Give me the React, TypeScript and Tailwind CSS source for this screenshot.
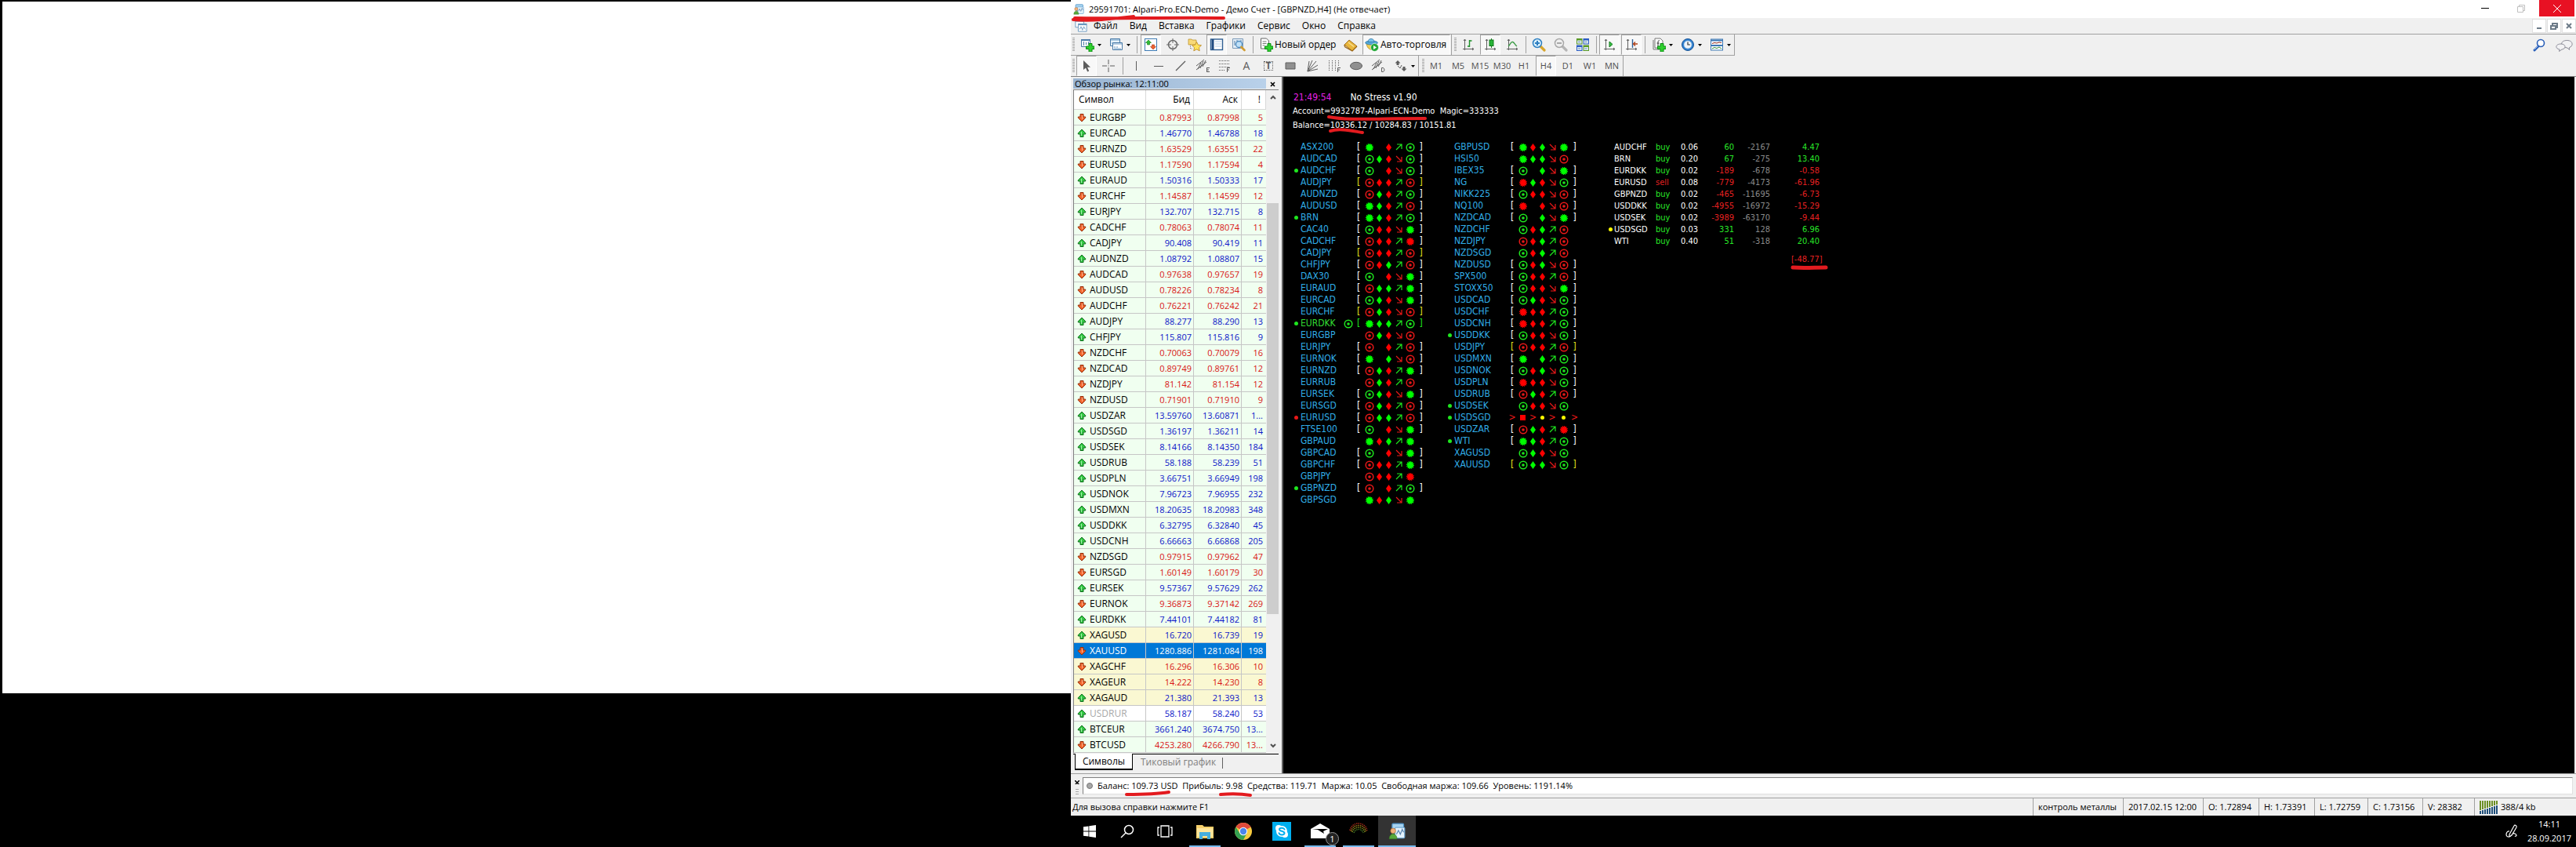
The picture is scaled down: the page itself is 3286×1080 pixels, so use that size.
import React from 'react';
import clsx from 'clsx';

type Quote = [symbol: string, bid: string, ask: string, spread: string, dir: 'up' | 'down'];

const QUOTES: Quote[] = [
  ['EURGBP', '0.87993', '0.87998', '5', 'down'],
  ['EURCAD', '1.46770', '1.46788', '18', 'up'],
  ['EURNZD', '1.63529', '1.63551', '22', 'down'],
  ['EURUSD', '1.17590', '1.17594', '4', 'down'],
  ['EURAUD', '1.50316', '1.50333', '17', 'up'],
  ['EURCHF', '1.14587', '1.14599', '12', 'down'],
  ['EURJPY', '132.707', '132.715', '8', 'up'],
  ['CADCHF', '0.78063', '0.78074', '11', 'down'],
  ['CADJPY', '90.408', '90.419', '11', 'up'],
  ['AUDNZD', '1.08792', '1.08807', '15', 'up'],
  ['AUDCAD', '0.97638', '0.97657', '19', 'down'],
  ['AUDUSD', '0.78226', '0.78234', '8', 'down'],
  ['AUDCHF', '0.76221', '0.76242', '21', 'down'],
  ['AUDJPY', '88.277', '88.290', '13', 'up'],
  ['CHFJPY', '115.807', '115.816', '9', 'up'],
  ['NZDCHF', '0.70063', '0.70079', '16', 'down'],
  ['NZDCAD', '0.89749', '0.89761', '12', 'down'],
  ['NZDJPY', '81.142', '81.154', '12', 'down'],
  ['NZDUSD', '0.71901', '0.71910', '9', 'down'],
  ['USDZAR', '13.59760', '13.60871', '1...', 'up'],
  ['USDSGD', '1.36197', '1.36211', '14', 'up'],
  ['USDSEK', '8.14166', '8.14350', '184', 'up'],
  ['USDRUB', '58.188', '58.239', '51', 'up'],
  ['USDPLN', '3.66751', '3.66949', '198', 'up'],
  ['USDNOK', '7.96723', '7.96955', '232', 'up'],
  ['USDMXN', '18.20635', '18.20983', '348', 'up'],
  ['USDDKK', '6.32795', '6.32840', '45', 'up'],
  ['USDCNH', '6.66663', '6.66868', '205', 'up'],
  ['NZDSGD', '0.97915', '0.97962', '47', 'down'],
  ['EURSGD', '1.60149', '1.60179', '30', 'down'],
  ['EURSEK', '9.57367', '9.57629', '262', 'up'],
  ['EURNOK', '9.36873', '9.37142', '269', 'down'],
  ['EURDKK', '7.44101', '7.44182', '81', 'up'],
  ['XAGUSD', '16.720', '16.739', '19', 'up'],
  ['XAUUSD', '1280.886', '1281.084', '198', 'down'],
  ['XAGCHF', '16.296', '16.306', '10', 'down'],
  ['XAGEUR', '14.222', '14.230', '8', 'down'],
  ['XAGAUD', '21.380', '21.393', '13', 'up'],
  ['USDRUR', '58.187', '58.240', '53', 'up'],
  ['BTCEUR', '3661.240', '3674.750', '13...', 'up'],
  ['BTCUSD', '4253.280', '4266.790', '13...', 'down'],
];

// code: signal, diamond, diamond, arrow, signal
// g/r = ring or diamond, G/R = solid burst, u/d = arrow, - = nothing
type Signal = { name: string; code: string; bracket?: 'w' | 'y' | 'g'; dot?: 'g' | 'r' };

const LEFT_SIGNALS: Signal[] = [
  { name: 'ASX200', code: 'G-rug', bracket: 'w' },
  { name: 'AUDCAD', code: 'ggrdg', bracket: 'w' },
  { name: 'AUDCHF', code: 'g-rdg', bracket: 'w', dot: 'g' },
  { name: 'AUDJPY', code: 'rrrur', bracket: 'y' },
  { name: 'AUDNZD', code: 'rgrug', bracket: 'w' },
  { name: 'AUDUSD', code: 'Ggrur', bracket: 'w' },
  { name: 'BRN', code: 'Ggrug', bracket: 'w', dot: 'g' },
  { name: 'CAC40', code: 'grrdG', bracket: 'w' },
  { name: 'CADCHF', code: 'rrruR', bracket: 'w' },
  { name: 'CADJPY', code: 'rrrur', bracket: 'y' },
  { name: 'CHFJPY', code: 'rrgur', bracket: 'w' },
  { name: 'DAX30', code: 'g-rdG', bracket: 'w' },
  { name: 'EURAUD', code: 'rgguG', bracket: 'w' },
  { name: 'EURCAD', code: 'ggrdG', bracket: 'w' },
  { name: 'EURCHF', code: 'rgrdr', bracket: 'y' },
  { name: 'EURDKK', code: 'Gggug', bracket: 'g', dot: 'g' },
  { name: 'EURGBP', code: 'rgrdr' },
  { name: 'EURJPY', code: 'r-rur', bracket: 'w' },
  { name: 'EURNOK', code: 'G-gdr', bracket: 'w' },
  { name: 'EURNZD', code: 'rgruG', bracket: 'w' },
  { name: 'EURRUB', code: 'rgrur' },
  { name: 'EURSEK', code: 'ggrdG', bracket: 'w' },
  { name: 'EURSGD', code: 'rgrur', bracket: 'w' },
  { name: 'EURUSD', code: 'rggur', bracket: 'w', dot: 'r' },
  { name: 'FTSE100', code: 'g-rdG', bracket: 'w' },
  { name: 'GBPAUD', code: 'GrguG' },
  { name: 'GBPCAD', code: 'g-rdG', bracket: 'w' },
  { name: 'GBPCHF', code: 'rrruG', bracket: 'w' },
  { name: 'GBPJPY', code: 'rrruR' },
  { name: 'GBPNZD', code: 'r-rug', bracket: 'w', dot: 'g' },
  { name: 'GBPSGD', code: 'GrgdG' },
];

const RIGHT_SIGNALS: Signal[] = [
  { name: 'GBPUSD', code: 'GrgdG', bracket: 'w' },
  { name: 'HSI50', code: 'Gggdr' },
  { name: 'IBEX35', code: 'g-gdG', bracket: 'w' },
  { name: 'NG', code: 'Rgrdg', bracket: 'w' },
  { name: 'NIKK225', code: 'grrdr', bracket: 'w' },
  { name: 'NQ100', code: 'R-rdr', bracket: 'w' },
  { name: 'NZDCAD', code: 'g-gdG', bracket: 'w' },
  { name: 'NZDCHF', code: 'grgur' },
  { name: 'NZDJPY', code: 'rrgur' },
  { name: 'NZDSGD', code: 'grgur' },
  { name: 'NZDUSD', code: 'grgdr', bracket: 'w' },
  { name: 'SPX500', code: 'grrur', bracket: 'w' },
  { name: 'STOXX50', code: 'grrdG', bracket: 'w' },
  { name: 'USDCAD', code: 'ggrdg', bracket: 'w' },
  { name: 'USDCHF', code: 'Rrrug', bracket: 'w' },
  { name: 'USDCNH', code: 'Rrrug', bracket: 'w' },
  { name: 'USDDKK', code: 'grrdg', bracket: 'w', dot: 'g' },
  { name: 'USDJPY', code: 'rrrur', bracket: 'y' },
  { name: 'USDMXN', code: 'G-gug', bracket: 'w' },
  { name: 'USDNOK', code: 'grgdg', bracket: 'w' },
  { name: 'USDPLN', code: 'Rrrdg', bracket: 'w' },
  { name: 'USDRUB', code: 'rgrur', bracket: 'w' },
  { name: 'USDSEK', code: 'grrdg', dot: 'g' },
  { name: 'USDSGD', code: '>', dot: 'g' },
  { name: 'USDZAR', code: 'rgruR', bracket: 'w' },
  { name: 'WTI', code: 'Ggrug', bracket: 'w', dot: 'g' },
  { name: 'XAGUSD', code: 'ggrdg' },
  { name: 'XAUUSD', code: 'gggdg', bracket: 'y' },
];

const TRADES = [
  ['AUDCHF', 'buy', '0.06', '60', '-2167', '4.47'],
  ['BRN', 'buy', '0.20', '67', '-275', '13.40'],
  ['EURDKK', 'buy', '0.02', '-189', '-678', '-0.58'],
  ['EURUSD', 'sell', '0.08', '-779', '-4173', '-61.96'],
  ['GBPNZD', 'buy', '0.02', '-465', '-11695', '-6.73'],
  ['USDDKK', 'buy', '0.02', '-4955', '-16972', '-15.29'],
  ['USDSEK', 'buy', '0.02', '-3989', '-63170', '-9.44'],
  ['USDSGD', 'buy', '0.03', '331', '128', '6.96'],
  ['WTI', 'buy', '0.40', '51', '-318', '20.40'],
];

const MENU = ['Файл', 'Вид', 'Вставка', 'Графики', 'Сервис', 'Окно', 'Справка'];
const PERIODS = ['M1', 'M5', 'M15', 'M30', 'H1', 'H4', 'D1', 'W1', 'MN'];

/* ---------- small shared pieces ---------- */

function Icon({ children, size = 18 }: { children: React.ReactNode; size?: number }) {
  return (
    <svg width={size} height={size} viewBox="0 0 18 18" fill="none" className="shrink-0" aria-hidden="true">
      {children}
    </svg>
  );
}

function Marker({ d, className, width = 4 }: { d: string; className: string; width?: number }) {
  return (
    <svg className={clsx('absolute overflow-visible pointer-events-none z-10', className)} width="10" height="10" aria-hidden="true">
      <path d={d} fill="none" stroke="#e31b1f" strokeWidth={width} strokeLinecap="round" strokeLinejoin="round" />
    </svg>
  );
}

function Grip() {
  return (
    <span className="w-1.5 shrink-0 flex justify-center">
      <span className="w-[3px] my-1 bg-[repeating-linear-gradient(to_bottom,#a8a8a8_0_1px,#f0f0f0_1px_2px)]" />
    </span>
  );
}

function Sep({ className = 'w-2' }: { className?: string }) {
  return (
    <span className={clsx('shrink-0 flex justify-center', className)}>
      <span className="w-px my-0.5 bg-[#a0a0a0]" />
    </span>
  );
}

interface ToolProps {
  label: string;
  pressed?: boolean;
  children: React.ReactNode;
}

function Tool({ label, pressed, children }: ToolProps) {
  return (
    <button
      aria-label={label}
      aria-pressed={pressed}
      className={clsx(
        'w-[26px] mx-px shrink-0 flex items-center justify-center border',
        pressed ? 'bg-[#f8f8f8] border-t-[#a0a0a0] border-l-[#a0a0a0] border-r-white border-b-white' : 'border-transparent'
      )}
    >
      {children}
    </button>
  );
}

function DropTool({ label, children }: ToolProps) {
  return (
    <button aria-label={label} className="w-[37px] shrink-0 flex items-center gap-1 pl-1.5">
      {children}
      <svg width="5" height="3" viewBox="0 0 5 3" aria-hidden="true"><path d="M0 0h5L2.500 3z" fill="#000" /></svg>
    </button>
  );
}

/* ---------- toolbar icons ---------- */

const GreenPlus = () => (
  <path d="M11 7.500h4v3.500h3v3.500h-3v3.500h-4v-3.500h-3.500v-3.500h3.500z" fill="#2fd02f" stroke="#0a8a12" strokeWidth="1" />
);

const AxisIcon = ({ children }: { children: React.ReactNode }) => (
  <Icon>
    <path d="M4.500 2v14M2 14.500h14M3 4l1.500-2L6 4M14 13l2 1.500-2 1.500" stroke="#606060" />
    {children}
  </Icon>
);

const AppIcon = ({ size = 16 }: { size?: number }) => (
  <Icon size={size}>
    <rect x="4" y="1" width="12" height="10" rx="1" fill="#a8d4f0" stroke="#4d93c8" />
    <rect x="7" y="5" width="10" height="11" rx="1" fill="#e5f3fc" stroke="#72aad4" />
    <path d="M8.500 12l2-4 2 4 2-5 1.500 3" stroke="#5b86b0" />
    <circle cx="5" cy="8.500" r="2.700" fill="#f2b07a" stroke="#a86428" strokeWidth=".5" />
    <path d="M1 17c0-7 8-7 8 0z" fill="#58a83b" stroke="#34741f" strokeWidth=".5" />
  </Icon>
);

const ChartsIcon = () => (
  <Icon size={16}>
    <path d="M1 1h12v10H1z" fill="#fff" stroke="#6494bd" />
    <path d="M1 2h12" stroke="#6494bd" strokeWidth="2" />
    <path d="M5 6h12v11H5z" fill="#fff" stroke="#6494bd" />
    <path d="M5 7h12" stroke="#6494bd" strokeWidth="2" />
    <path d="M7 14l2-4 2 5 2-5 2 4" stroke="#6494bd" />
  </Icon>
);

const Magnifier = ({ sign, color, fill, handle }: { sign: string; color: string; fill: string; handle: string }) => (
  <Icon>
    <path d="M11 11l5 5" stroke={handle} strokeWidth="3.200" strokeLinecap="round" />
    <circle cx="7" cy="7" r="5.500" fill={fill} stroke={color} strokeWidth="1.500" />
    <path d={sign} stroke={color} strokeWidth="2" />
  </Icon>
);

function StandardBar() {
  return (
    <div className="flex h-7 border-t border-[#a0a0a0]">
      <div className="flex h-[27px] border-b border-r border-[#a0a0a0]">
        <Grip />
        <DropTool label="Новый график">
          <Icon>
            <path d="M1.500 2.500h11v9h-11z" fill="#fff" stroke="#4a7ba8" />
            <path d="M1 3h12" stroke="#4a7ba8" strokeWidth="2" />
            <path d="M4.500 5v5M7.500 6v3M10.500 5v4" stroke="#4a7ba8" />
            <GreenPlus />
          </Icon>
        </DropTool>
        <DropTool label="Профили">
          <Icon>
            <path d="M1.500 1.500h12v9h-12z" fill="#e6f2fa" stroke="#4a7ba8" />
            <path d="M4.500 6.500h12v9h-12z" fill="#fff" stroke="#4a7ba8" />
            <path d="M2 3h11M5 8h11M4 6v2M7 11v2M10 11v2M6 14h9" stroke="#6d9dc6" />
          </Icon>
        </DropTool>
        <Sep />
        <Tool label="Обзор рынка" pressed>
          <Icon>
            <rect x="1.500" y="1.500" width="15" height="15" fill="#fff" stroke="#3f7cb5" />
            <path d="M6 3l3.500 3.500h-2V9h-3V6.500h-2z" fill="#2fbf35" stroke="#14761a" strokeWidth=".6" />
            <path d="M12 15l3.500-3.500h-2V9h-3v2.500h-2z" fill="#f2622e" stroke="#a5330f" strokeWidth=".6" />
          </Icon>
        </Tool>
        <Tool label="Окно данных">
          <Icon>
            <circle cx="9" cy="9" r="5.500" stroke="#6a6a6a" strokeWidth="1.500" />
            <path d="M9 1v6M9 11v6M1 9h6M11 9h6" stroke="#6a6a6a" />
          </Icon>
        </Tool>
        <Tool label="Навигатор">
          <Icon>
            <path d="M1 2h4l1 1h5v6H1z" fill="#f8d978" stroke="#b88a20" strokeWidth=".7" />
            <path d="M3.500 9v5h3" stroke="#777" strokeDasharray="1 1" />
            <path d="M11.500 5.500l1.900 3.700 4.100.6-3 2.900.7 4.100-3.700-1.900-3.700 1.900.7-4.100-3-2.900 4.100-.6z" fill="#ffe25c" stroke="#b8801a" strokeWidth=".8" />
          </Icon>
        </Tool>
        <Tool label="Терминал" pressed>
          <Icon>
            <rect x="1.500" y="2" width="15" height="13.500" fill="#fff" stroke="#2f5f92" strokeWidth="1.400" />
            <path d="M4 2v13.500" stroke="#1f4a80" strokeWidth="3" />
            <path d="M7 5h8M7 8h8M7 11h8" stroke="#b5d0e8" />
          </Icon>
        </Tool>
        <Tool label="Тестер стратегий">
          <Icon>
            <path d="M1.500 1.500h13v12h-13z" fill="#e4eef7" stroke="#7b9ab8" />
            <path d="M4 4v6M7 3v7M12 3v4" stroke="#517ba3" />
            <circle cx="9.500" cy="8.500" r="4" fill="#bfe0f7" stroke="#4f8cc0" strokeWidth="1.300" />
            <path d="M12.500 12l4 4" stroke="#d29d32" strokeWidth="2.600" strokeLinecap="round" />
          </Icon>
        </Tool>
        <Sep />
        <button className="w-[107px] shrink-0 flex items-center gap-0.5 pl-1 whitespace-nowrap">
          <Icon>
            <path d="M2.500 1h7l3 3v10h-10z" fill="#fff" stroke="#666" />
            <path d="M4.500 5h5M4.500 7.500h5M4.500 10h3" stroke="#777" />
            <GreenPlus />
          </Icon>
          Новый ордер
        </button>
        <Tool label="MetaEditor">
          <Icon>
            <path d="M1 9l6-6 10 8-6 6z" fill="#e9b63c" stroke="#9a6412" strokeWidth=".9" />
            <path d="M1 9c0 2 0 2 1 3l9 5 6-6" stroke="#9a6412" strokeWidth="1.300" />
            <path d="M6 6l7 5.500" stroke="#f8df92" strokeWidth="1.500" />
          </Icon>
        </Tool>
        <button
          aria-pressed="true"
          className="w-[112px] mx-px shrink-0 flex items-center gap-0.5 pl-0.5 whitespace-nowrap border border-t-[#a0a0a0] border-l-[#a0a0a0] border-r-white border-b-white bg-[#f8f8f8]"
        >
          <Icon>
            <path d="M2 7c1 11 12 11 13 0z" fill="#f2cf55" stroke="#ab8419" strokeWidth=".7" />
            <ellipse cx="8.500" cy="6.500" rx="8" ry="2.500" fill="#56a9d8" stroke="#256f9f" strokeWidth=".7" />
            <path d="M4 5.500C4 0 12 0 12 5.500z" fill="#78c2ea" stroke="#256f9f" strokeWidth=".7" />
            <circle cx="12.500" cy="12.500" r="5" fill="#22a837" stroke="#fff" strokeWidth=".6" />
            <path d="M11 10l4 2.500-4 2.500z" fill="#fff" />
          </Icon>
          Авто-торговля
        </button>
      </div>
      <div className="flex h-[27px] border-b border-r border-[#a0a0a0] pl-px">
        <Grip />
        <Tool label="Бары">
          <AxisIcon><path d="M10.500 3v9M10.500 4h3M8 11h3" stroke="#1b8f27" strokeWidth="1.400" /></AxisIcon>
        </Tool>
        <Tool label="Свечи" pressed>
          <AxisIcon>
            <path d="M10.500 1v12" stroke="#127a1c" />
            <rect x="8" y="3" width="5" height="7.500" fill="#29b538" stroke="#127a1c" />
          </AxisIcon>
        </Tool>
        <Tool label="Линия">
          <AxisIcon><path d="M4 11c2-1 3-6 5.500-5.500S12 9 15 11" stroke="#3a9a44" strokeWidth="1.300" /></AxisIcon>
        </Tool>
        <Sep className="w-1.5" />
        <Tool label="Увеличить"><Magnifier sign="M7 4v6M4 7h6" color="#2e7fc1" fill="#d9f0fd" handle="#d8a62c" /></Tool>
        <Tool label="Уменьшить"><Magnifier sign="M4 7h6" color="#a8a8a8" fill="#efefef" handle="#b5b5b5" /></Tool>
        <Tool label="Окна мозаикой">
          <Icon>
            <path d="M1 1h7.500v7.500H1z" fill="#5a9a26" />
            <path d="M9.500 1H17v7.500H9.500z" fill="#2b5cc4" />
            <path d="M1 9.500h7.500V17H1z" fill="#2b5cc4" />
            <path d="M9.500 9.500H17V17H9.500z" fill="#5a9a26" />
            <path d="M2 3.500h5.500v4H2zM10.500 3.500H16v4h-5.500zM2 12h5.500v4H2zM10.500 12H16v4h-5.500z" fill="#dbe9f2" />
            <path d="M3 5.500h3M11.500 5.500h3M3 14h3M11.500 14h3" stroke="#6f93b8" />
          </Icon>
        </Tool>
        <Sep className="w-1.5" />
        <Tool label="Автопрокрутка" pressed>
          <AxisIcon><path d="M9 5l4 3.500-4 3.500z" fill="#39c148" stroke="#127a1c" /></AxisIcon>
        </Tool>
        <Tool label="Сдвиг графика" pressed>
          <AxisIcon>
            <path d="M10.500 2v11" stroke="#2c5f98" strokeWidth="1.400" />
            <path d="M17 8h-5M14 5.500L11.500 8l2.500 2.500" stroke="#b0431b" strokeWidth="1.300" />
          </AxisIcon>
        </Tool>
        <Sep className="w-1.5" />
        <DropTool label="Индикаторы">
          <Icon>
            <path d="M4 1h7l3 3v9H4z" fill="#fff" stroke="#777" />
            <path d="M2 3v12h8" stroke="#777" />
            <path d="M10 4c-2-1-2 1-2 3v4M6.500 7h3" stroke="#333" />
            <GreenPlus />
          </Icon>
        </DropTool>
        <DropTool label="Периоды">
          <Icon>
            <circle cx="9" cy="9" r="7.500" fill="#2e7fd0" stroke="#1a5596" />
            <circle cx="9" cy="9" r="5" fill="#eef5fb" stroke="#8fb9de" strokeWidth=".6" />
            <path d="M9 5.500V9h3" stroke="#333" strokeWidth="1.200" />
          </Icon>
        </DropTool>
        <DropTool label="Шаблоны">
          <Icon>
            <rect x="1.500" y="2" width="15" height="14" fill="#fff" stroke="#3c78b4" />
            <path d="M1.500 3.500h15M1.500 10h15" stroke="#3c78b4" strokeWidth="2" />
            <path d="M3 7.500l3-1 3 .5 3-1 3 .5" stroke="#8b2a1f" />
            <path d="M3 14l3-1.500 3 1 3-1.500 3 2" stroke="#2c8a39" />
          </Icon>
        </DropTool>
      </div>
      <div className="ml-auto flex items-center gap-3 pr-1">
        <button aria-label="Поиск">
          <Icon>
            <circle cx="11" cy="6" r="4.500" fill="#fff" stroke="#2a5fb8" strokeWidth="1.600" />
            <path d="M8 10l-5 5" stroke="#2a5fb8" strokeWidth="3" strokeLinecap="round" />
            <path d="M7 10l-4 4" stroke="#a9c4ee" />
          </Icon>
        </button>
        <button aria-label="Сообщения">
          <svg width="22" height="16" viewBox="0 0 22 16" fill="#f2f2f4" stroke="#8a8a96" aria-hidden="true">
            <path d="M15 11l2.500 2.500-.2-2.800C23 9 22.500 1.500 14.500 1.500 6 1.500 5.500 9 12 10.500z" />
            <path d="M5 13l-.5 2.500L8 13c6-.8 5-7-1-7-7.500 0-8 6-2 7z" />
          </svg>
        </button>
      </div>
    </div>
  );
}

function DrawingBar() {
  const g = '#5c5c5c';
  return (
    <div className="flex h-[27px] border-b border-[#808080]">
      <div className="flex border-r border-[#a0a0a0]">
        <Grip />
        <Tool label="Курсор" pressed>
          <Icon><path d="M5 2v12l3-2.500 2.200 5 2-1-2.200-4.700h4z" fill={g} /></Icon>
        </Tool>
        <Tool label="Перекрестие">
          <Icon><path d="M9 1v6M9 11v6M1 9h6M11 9h6M9 8.500v1" stroke={g} /></Icon>
        </Tool>
        <Sep />
        <Tool label="Вертикальная линия"><Icon><path d="M8.500 3v12" stroke={g} /></Icon></Tool>
        <Tool label="Горизонтальная линия"><Icon><path d="M3 9.500h12" stroke={g} /></Icon></Tool>
        <Tool label="Трендовая линия"><Icon><path d="M3 15L15 3" stroke={g} strokeWidth="1.300" /></Icon></Tool>
        <Tool label="Равноудаленный канал">
          <Icon><path d="M1 9l10-8M1 14L14 4M3 13l4-8M6 12l4-9M9 10l4-8M14.500 11v6M14.500 11.500H18M14.500 14H17M14.500 16.500H18" stroke={g} /></Icon>
        </Tool>
        <Tool label="Линии Фибоначчи">
          <Icon>
            <path d="M2 2.500h13M2 6.500h13M2 10.500h13M2 14.500h7" stroke={g} strokeDasharray="1 1" />
            <path d="M12.500 17v-5.500H16M12.500 14H15" stroke={g} />
          </Icon>
        </Tool>
        <Tool label="Текст"><span className="text-sm text-[#5c5c5c]">A</span></Tool>
        <Tool label="Текстовая метка">
          <span className="w-3 h-3 border border-dotted border-[#5c5c5c] text-xs leading-[10px] font-bold text-[#5c5c5c]">T</span>
        </Tool>
        <Tool label="Прямоугольник"><Icon><path d="M3 5h12v8H3z" fill="#909090" stroke={g} /></Icon></Tool>
        <Tool label="Веер">
          <Icon><path d="M3 16L5 3M3 16L9 2M3 16L14 3M3 16L16 8M3 16l13-3" stroke={g} /></Icon>
        </Tool>
        <Tool label="Временные зоны">
          <Icon>
            <path d="M2.500 2v13M6.500 2v13M10.500 2v13M14.500 2v8" stroke={g} strokeDasharray="1 1" />
            <path d="M13.500 17v-5.500H17M13.500 14H16" stroke={g} />
          </Icon>
        </Tool>
        <Tool label="Эллипс"><Icon><ellipse cx="9" cy="9" rx="7.500" ry="4.700" fill="#909090" stroke={g} /></Icon></Tool>
        <Tool label="Канал отклонения">
          <Icon><path d="M1 9l10-8M1 14L14 4M3 13l4-8M6 12l4-9M9 10l4-8M13.500 11.500v5h1.500c2.500 0 2.500-5 0-5z" stroke={g} /></Icon>
        </Tool>
        <DropTool label="Стрелки">
          <Icon>
            <path d="M5 2l3.500 3.500h-2V8h-3V5.500h-2zM13 16l3.500-3.500h-2V10h-3v2.500h-2z" fill={g} />
            <path d="M5 9l3 3 2-4" stroke={g} />
          </Icon>
        </DropTool>
      </div>
      <div className="flex border-r border-[#a0a0a0] pl-0.5">
        <Grip />
        {PERIODS.map(p => (
          <Tool key={p} label={p} pressed={p === 'H4'}>
            <span className="text-[11px] text-[#505050]">{p}</span>
          </Tool>
        ))}
      </div>
    </div>
  );
}

/* ---------- window chrome ---------- */

function TitleBar() {
  return (
    <div className="h-[23px] bg-white flex items-center pl-[3px] text-black">
      <AppIcon size={14} />
      <h1 className="relative ml-1.5 text-[11px] leading-4">
        29591701: Alpari-Pro.ECN-Demo - Демо Счет - [GBPNZD,H4] (Не отвечает)
        <Marker className="left-0 top-0" d="M-20 21c25 2 50-1 77-4M-18 19c50 1 120-1 190 0" />
      </h1>
      <div className="ml-auto self-start flex h-[21px]">
        <button aria-label="Свернуть" className="w-[46px] flex items-center justify-center">
          <span className="w-2.5 h-px bg-black" />
        </button>
        <button aria-label="Свернуть в окно" className="w-[46px] flex items-center justify-center">
          <svg width="10" height="10" fill="none" stroke="#c0c0c0" aria-hidden="true">
            <path d="M.5 2.500h7v7h-7zM2.500 2.500v-2h7v7h-2" />
          </svg>
        </button>
        <button aria-label="Закрыть" className="w-[45px] bg-[#e81123] flex items-center justify-center mr-0.5">
          <svg width="10" height="10" stroke="#fff" aria-hidden="true"><path d="M0 0l10 10M10 0L0 10" /></svg>
        </button>
      </div>
    </div>
  );
}

function MenuBar() {
  const mdi = [
    ['Свернуть график', 'M2 8h6'],
    ['Развернуть график', 'M1 5h6v4H1zM3 4V2h6v5H8'],
    ['Закрыть график', 'M2 2l6 6M8 2L2 8'],
  ];
  return (
    <nav className="h-5 flex items-center pl-[5px] text-xs text-black">
      <ChartsIcon />
      <ul className="flex gap-[15px] ml-2">
        {MENU.map(m => (
          <li key={m}><button>{m}</button></li>
        ))}
      </ul>
      <div className="ml-auto flex gap-px">
        {mdi.map(([label, d]) => (
          <button key={label} aria-label={label} className="w-[18px] h-[18px] bg-white border border-[#e0e0e0] flex items-center justify-center">
            <svg width="10" height="10" fill="none" stroke="#6d7b88" strokeWidth="2" aria-hidden="true"><path d={d} /></svg>
          </button>
        ))}
      </div>
    </nav>
  );
}

function PriceArrow({ dir }: { dir: 'up' | 'down' }) {
  const up = dir === 'up';
  return (
    <svg width="12" height="12" viewBox="0 0 12 12" aria-hidden="true" className={clsx('shrink-0', !up && 'rotate-180')}>
      <path d="M6 1l4.700 4.700v1.300H8v3.500H4V7H1.300V5.700z" fill={up ? '#35c845' : '#f0642c'} stroke={up ? '#0f6d1c' : '#94300c'} />
      <path d="M5.500 4v5" stroke={up ? '#a5f0ad' : '#ffb48f'} />
    </svg>
  );
}

function MarketWatch() {
  const cell = 'border-r border-b border-[#c6c6c6] text-right text-[11px]';
  return (
    <aside className="w-[271px] shrink-0 pl-[3px] pt-0.5 pb-1 pr-1 flex flex-col border-r-2 border-[#606060] text-xs text-black">
      <div className="flex h-3.5 items-start">
        <h2 className="w-[249px] h-[13px] text-[11px] leading-[13px] pl-0.5 bg-linear-to-r from-[#99b4d1] to-[#b9d1ea]">Обзор рынка: 12:11:00</h2>
        <button aria-label="Закрыть обзор рынка" className="w-4 h-3.5 flex items-center justify-center">
          <svg width="7" height="7" stroke="#000" strokeWidth="1.600" aria-hidden="true"><path d="M1 1l5 5M6 1L1 6" /></svg>
        </button>
      </div>
      <div className="flex border-t border-l border-[#808080]">
        <table className="w-[245px] table-fixed border-separate border-spacing-0 bg-white">
          <colgroup>
            <col className="w-[92px]" />
            <col className="w-[61px]" />
            <col className="w-[61px]" />
            <col className="w-[31px]" />
          </colgroup>
          <thead>
            <tr className="h-[25px]">
              <th className="font-normal text-left pl-1.5 border-r border-b border-[#d8d8d8]">Символ</th>
              <th className="font-normal text-right pr-1 border-r border-b border-[#d8d8d8]">Бид</th>
              <th className="font-normal text-right pr-1 border-r border-b border-[#d8d8d8]">Аск</th>
              <th className="font-normal text-right pr-1.5 border-r border-b border-[#d8d8d8]">!</th>
            </tr>
          </thead>
          <tbody>
            {QUOTES.map(([symbol, bid, ask, spread, dir]) => {
              const selected = symbol === 'XAUUSD';
              return (
                <tr
                  key={symbol}
                  className={clsx(
                    'h-5 leading-4',
                    selected ? 'bg-[#0078d7] text-white' : dir === 'up' ? 'text-[#0a14c8]' : 'text-[#d81414]',
                    !selected && (symbol === 'USDRUR' ? 'bg-white' : symbol.startsWith('XAG') ? 'bg-[#faf8d2]' : 'bg-[#f0fff0]')
                  )}
                >
                  <td className={clsx('border-r border-b border-[#c6c6c6] pl-1', selected ? 'text-white' : symbol === 'USDRUR' ? 'text-[#a8a8a8]' : 'text-black')}>
                    <span className="flex items-center gap-1">
                      <PriceArrow dir={dir} />
                      {symbol}
                    </span>
                  </td>
                  <td className={clsx(cell, 'pr-0.5')}>{bid}</td>
                  <td className={clsx(cell, 'pr-0.5')}>{ask}</td>
                  <td className="border-b border-[#c6c6c6] text-right text-[11px] pr-1">{spread}</td>
                </tr>
              );
            })}
          </tbody>
        </table>
        <div className="w-[15px] ml-px flex flex-col items-center justify-between py-1.5 bg-[#f0f0f0] relative">
          <svg width="8" height="6" fill="none" stroke="#505050" strokeWidth="2" aria-hidden="true"><path d="M1 5l3-3 3 3" /></svg>
          <span className="absolute inset-x-0 top-[17%] bottom-[21%] bg-[#cdcdcd]" />
          <svg width="8" height="6" fill="none" stroke="#505050" strokeWidth="2" aria-hidden="true"><path d="M1 1l3 3 3-3" /></svg>
        </div>
      </div>
      <div className="mt-px flex items-start border-t border-black pl-0.5">
        <button className="-mt-px h-[21px] w-[74px] bg-white border border-t-0 border-black border-b-2">Символы</button>
        <button className="h-5 pl-2.5 text-[#808080]">Тиковый график</button>
        <span className="w-px h-3.5 mt-1 ml-2 bg-[#606060]" />
      </div>
    </aside>
  );
}

/* ---------- chart ---------- */

const GREEN = '#1ee61e';
const RED = '#e81818';

function Ring({ color }: { color: string }) {
  return (
    <svg width="12" height="12" viewBox="0 0 12 12" className="mx-auto" aria-hidden="true">
      <circle cx="6" cy="6" r="4.800" fill="none" stroke={color} strokeWidth="1.500" />
      <circle cx="6" cy="6" r="1.800" fill={color} />
    </svg>
  );
}

function Burst({ color }: { color: string }) {
  return (
    <svg width="12" height="12" viewBox="0 0 12 12" className="mx-auto" aria-hidden="true">
      <circle cx="6" cy="6" r="3.900" fill={color} />
      <circle cx="6" cy="6" r="4.300" fill="none" stroke={color} strokeWidth="1.400" strokeDasharray="1.200 1" />
    </svg>
  );
}

function SignalGlyph({ ch }: { ch: string }) {
  if (ch === 'G' || ch === 'R') return <Burst color={ch === 'G' ? '#00ff00' : '#ff0000'} />;
  return <Ring color={ch === 'g' ? GREEN : RED} />;
}

function Diamond({ ch }: { ch: string }) {
  if (ch === '-') return null;
  return (
    <svg width="7" height="10" viewBox="0 0 7 10" className="mx-auto" aria-hidden="true">
      <path d="M3.500 0L7 5l-3.500 5L0 5z" fill={ch === 'g' ? '#00ff00' : '#ff0000'} />
    </svg>
  );
}

function Trend({ ch }: { ch: string }) {
  const up = ch === 'u';
  return (
    <svg width="9" height="9" viewBox="0 0 9 9" fill="none" className="mx-auto" aria-hidden="true">
      <path d={up ? 'M1 8l6.500-6.500M2 1h6v6' : 'M1 1l6.500 6.500M2 8h6V2'} stroke={up ? GREEN : RED} strokeWidth="1.200" />
    </svg>
  );
}

function Dot({ className }: { className: string }) {
  return <span className={clsx('block w-[5px] h-[5px] rounded-full mx-auto', className)} />;
}

function SignalTable({ rows }: { rows: Signal[] }) {
  return (
    <table className="w-[171px] table-fixed text-xs text-center">
      <colgroup>
        <col className="w-2.5" />
        <col className="w-[55px]" />
        <col className="w-[13px]" />
        <col className="w-3.5" />
        <col className="w-[13px]" />
        <col className="w-[13px]" />
        <col className="w-[11px]" />
        <col className="w-3.5" />
        <col className="w-[15px]" />
        <col className="w-[13px]" />
      </colgroup>
      <tbody>
        {rows.map(({ name, code, bracket, dot }) => {
          const alert = code === '>';
          const hot = bracket === 'g';
          const edge = clsx('p-0', alert ? 'text-[#e81818]' : hot ? 'text-[#1ee61e]' : bracket === 'y' ? 'text-[#e6e61e]' : 'text-white');
          return (
            <tr key={name} className="h-[15px] leading-[15px]">
              <td className="p-0">{dot && <Dot className={dot === 'g' ? 'bg-[#1ee61e]' : 'bg-[#e81818]'} />}</td>
              <td className={clsx('p-0 pl-px text-left', hot ? 'text-[#32dc32]' : 'text-[#30aee8]')}>{name}</td>
              <td className="p-0">{hot && <Ring color={GREEN} />}</td>
              <td className={edge}>{alert ? '>' : bracket && '['}</td>
              {alert ? (
                <>
                  <td className="p-0"><span className="block w-[7px] h-[7px] mx-auto bg-[#ff0000]" /></td>
                  <td className={edge}>&gt;</td>
                  <td className="p-0"><Dot className="bg-[#ffff00]" /></td>
                  <td className={edge}>&gt;</td>
                  <td className="p-0"><Dot className="bg-[#ffff00]" /></td>
                </>
              ) : (
                <>
                  <td className="p-0"><SignalGlyph ch={code[0]} /></td>
                  <td className="p-0"><Diamond ch={code[1]} /></td>
                  <td className="p-0"><Diamond ch={code[2]} /></td>
                  <td className="p-0"><Trend ch={code[3]} /></td>
                  <td className="p-0"><SignalGlyph ch={code[4]} /></td>
                </>
              )}
              <td className={edge}>{alert ? '>' : bracket && ']'}</td>
            </tr>
          );
        })}
      </tbody>
    </table>
  );
}

const tone = (v: string) => (v.startsWith('-') ? 'text-[#e62020]' : 'text-[#28e628]');

function TradeTable() {
  return (
    <div className="text-[11px]">
      <table className="w-[272px] table-fixed text-right">
        <colgroup>
          <col className="w-2.5" />
          <col className="w-[53px]" />
          <col className="w-8" />
          <col className="w-6" />
          <col className="w-11" />
          <col className="w-[46px]" />
          <col className="w-[63px]" />
        </colgroup>
        <tbody>
          {TRADES.map(([symbol, side, lots, pips, swap, profit]) => (
            <tr key={symbol} className="h-[15px] leading-[15px]">
              <td className="p-0">{symbol === 'USDSGD' && <Dot className="bg-[#ffff00]" />}</td>
              <td className="p-0 text-left text-white">{symbol}</td>
              <td className={clsx('p-0 text-left', side === 'sell' ? 'text-[#e62020]' : 'text-[#28e628]')}>{side}</td>
              <td className="p-0 text-left text-white">{lots}</td>
              <td className={clsx('p-0', tone(pips))}>{pips}</td>
              <td className="p-0 text-[#8a8a8a]">{swap}</td>
              <td className={clsx('p-0', tone(profit))}>{profit}</td>
            </tr>
          ))}
        </tbody>
      </table>
      <p className="relative ml-auto -mr-1 w-10 mt-2 text-[#e62020] whitespace-nowrap">
        [-48.77]
        <Marker className="left-0 top-0" d="M2 18c14 1 28 0 42 0" width={5} />
      </p>
    </div>
  );
}

function Chart() {
  return (
    <main className="grow bg-black mr-0.5 pl-[11px] pt-[17px] text-white font-[family-name:'DejaVu_Sans_Condensed','DejaVu_Sans',sans-serif]">
      <div className="flex gap-6 pl-0.5 text-xs leading-[18px]">
        <span className="text-[#e620e6]">21:49:54</span>
        <span>No Stress v1.90</span>
      </div>
      <div className="relative pl-px text-[11px] leading-[18px] whitespace-pre">
        <p>Account=9932787-Alpari-ECN-Demo  Magic=333333</p>
        <p>Balance=10336.12 / 10284.83 / 10151.81</p>
        <Marker className="left-0 top-0" d="M47 16c25 5 60 2 123 2" />
        <Marker className="left-0 top-0" d="M49 34c12-4 28 0 41 2" />
      </div>
      <div className="flex items-start mt-[11px]">
        <SignalTable rows={LEFT_SIGNALS} />
        <div className="ml-[25px]"><SignalTable rows={RIGHT_SIGNALS} /></div>
        <div className="ml-[34px]"><TradeTable /></div>
      </div>
    </main>
  );
}

/* ---------- bottom bars ---------- */

function TerminalStrip() {
  return (
    <div className="h-[31px] flex border-t border-[#a0a0a0] py-1 pr-1 text-[11px] text-black">
      <div className="w-[15px] flex flex-col items-center gap-1.5 pt-1">
        <svg width="6" height="6" stroke="#000" strokeWidth="1.500" aria-hidden="true"><path d="M0 0l6 6M6 0L0 6" /></svg>
        <span className="w-1 h-2 bg-[repeating-linear-gradient(to_bottom,#a8a8a8_0_1px,#f0f0f0_1px_3px)]" />
      </div>
      <div className="grow bg-white border border-[#808080] border-b-[#e0e0e0] border-r-[#e0e0e0] flex items-center pl-1 whitespace-pre">
        <span className="w-2 h-2 rounded-full bg-[#a8a8a8] border border-[#777]" />
        <p className="relative ml-1.5">
          Баланс: 109.73 USD  Прибыль: 9.98  Средства: 119.71  Маржа: 10.05  Свободная маржа: 109.66  Уровень: 1191.14%
          <Marker className="left-0 top-0" d="M37 19c18 0 36 0 54-3" />
          <Marker className="left-0 top-0" d="M157 19c12-1 26-1 38 1" />
        </p>
      </div>
    </div>
  );
}

function StatusBar() {
  const cell = 'h-full flex items-center border-l border-[#a0a0a0] pl-1.5';
  return (
    <footer className="h-[23px] flex items-center border-t border-[#a0a0a0] pl-0.5 text-[11px] text-black whitespace-nowrap">
      <span className="grow">Для вызова справки нажмите F1</span>
      <span className={clsx(cell, 'w-[115px]')}>контроль металлы</span>
      <span className={clsx(cell, 'w-[102px]')}>2017.02.15 12:00</span>
      <span className={clsx(cell, 'w-[71px]')}>O: 1.72894</span>
      <span className={clsx(cell, 'w-[71px]')}>H: 1.73391</span>
      <span className={clsx(cell, 'w-[68px]')}>L: 1.72759</span>
      <span className={clsx(cell, 'w-[70px]')}>C: 1.73156</span>
      <span className={clsx(cell, 'w-[66px]')}>V: 28382</span>
      <span className={clsx(cell, 'w-[130px] gap-1')}>
        <svg width="23" height="17" viewBox="0 0 23 17" aria-hidden="true">
          {[0, 3, 6, 9, 12, 15, 18, 21].map((x, i) => (
            <g key={x}>
              <rect x={x} y="0" width="2" height={12 - i} fill="#6b8e23" />
              <rect x={x} y={13 - i} width="2" height={4 + i} fill="#1f4e79" />
            </g>
          ))}
        </svg>
        388/4 kb
      </span>
    </footer>
  );
}

interface TaskProps {
  label: string;
  running?: boolean;
  active?: boolean;
  children: React.ReactNode;
}

function Task({ label, running, active, children }: TaskProps) {
  return (
    <button aria-label={label} className={clsx('relative w-12 h-10 flex items-center justify-center', active && 'bg-[#333333]')}>
      {children}
      {running && <span className={clsx('absolute bottom-0 h-0.5 bg-[#76b9ed]', active ? 'inset-x-0' : 'inset-x-1')} />}
    </button>
  );
}

function Taskbar() {
  return (
    <div className="h-10 bg-black flex text-white">
      <Task label="Пуск">
        <svg width="16" height="16" viewBox="0 0 16 16" fill="#fff" aria-hidden="true">
          <path d="M0 2.300l6.500-.9v6.200H0zM7.300 1.300L16 0v7.600H7.300zM0 8.400h6.500v6.200L0 13.700zM7.300 8.400H16V16l-8.700-1.300z" />
        </svg>
      </Task>
      <Task label="Поиск">
        <svg width="18" height="18" fill="none" stroke="#fff" strokeWidth="1.500" aria-hidden="true">
          <circle cx="11" cy="7" r="5.500" />
          <path d="M7 11l-6 6" />
        </svg>
      </Task>
      <Task label="Представление задач">
        <svg width="20" height="16" fill="none" stroke="#fff" strokeWidth="1.300" aria-hidden="true">
          <path d="M5 1h10v14H5zM3 3H1v10h2M17 3h2v10h-2" />
        </svg>
      </Task>
      <div className="flex gap-px ml-[3px]">
        <Task label="Проводник" running>
          <svg width="22" height="19" viewBox="0 0 22 19" aria-hidden="true">
            <path d="M0 1h8l2 2h12v15H0z" fill="#f5cf6a" />
            <path d="M1 5h20v11H1z" fill="#fde59c" />
            <path d="M4 19v-9h14v9h-4v-4H8v4z" fill="#45aede" />
          </svg>
        </Task>
        <Task label="Chrome">
          <svg width="22" height="22" viewBox="0 0 22 22" aria-hidden="true">
            <circle cx="11" cy="11" r="11" fill="#f7ca3e" />
            <path d="M11 11L1.500 5.500A11 11 0 0120.500 5.500z" fill="#df4a3c" />
            <path d="M1.500 5.500A11 11 0 0011 22l4.500-8.500-9 0z" fill="#34a152" />
            <path d="M11 5.500h9.500" stroke="#df4a3c" />
            <circle cx="11" cy="11" r="5.200" fill="#fff" />
            <circle cx="11" cy="11" r="4.200" fill="#4a85ec" />
          </svg>
        </Task>
        <Task label="Skype">
          <svg width="24" height="24" viewBox="0 0 24 24" aria-hidden="true">
            <path d="M0 0h24v24H0z" fill="#00aff0" />
            <circle cx="12" cy="12" r="7" fill="#fff" />
            <circle cx="8" cy="8" r="4" fill="#fff" />
            <circle cx="16" cy="16" r="4" fill="#fff" />
            <path d="M15.500 9.500c-1-2.500-6.500-2.500-6.500 0 0 3 6.500 1.500 6.500 5 0 2.600-6 2.800-7-.3" fill="none" stroke="#00aff0" strokeWidth="2" strokeLinecap="round" />
          </svg>
        </Task>
        <Task label="Почта" running>
          <svg width="24" height="20" viewBox="0 0 24 20" aria-hidden="true">
            <path d="M0 7l12-7 12 7v12H0z" fill="#fff" />
            <path d="M2 7h20l-6 3 1 3-8-5z" fill="#000" />
          </svg>
          <span className="absolute right-0 bottom-0.5 w-[17px] h-[17px] rounded-full bg-[#222] border border-[#999] text-[11px] leading-[15px]">1</span>
        </Task>
        <Task label="Радуга" running>
          <svg width="24" height="24" viewBox="0 0 24 24" fill="none" strokeWidth="1.500" strokeDasharray="1.500 1" aria-hidden="true">
            <path d="M1 11C3-1 21-1 23 11" stroke="#a52a1a" />
            <path d="M2.500 12c2-10 17-10 19 0" stroke="#a8791a" />
            <path d="M4 13c2-8 14-8 16 0" stroke="#7d8a1c" />
            <path d="M6 14c2-6 10-6 12 0" stroke="#3f6e22" />
          </svg>
        </Task>
        <Task label="MetaTrader" running active><AppIcon size={22} /></Task>
      </div>
      <div className="ml-auto flex items-center gap-3 pr-1.5">
        <svg width="16" height="18" viewBox="0 0 16 18" fill="none" stroke="#fff" strokeWidth="1.200" aria-hidden="true">
          <path d="M5 13L11 2c1-2 4 0 3 2L8 14l-3 2zM5 9c-4-1-6 7-1 7s4-6 8-4 1 4 0 3" />
        </svg>
        <p className="text-[11px] leading-[18px] text-center">14:11<br />28.09.2017</p>
      </div>
    </div>
  );
}

export default function App() {
  return (
    <div className="min-h-screen grid grid-cols-[1366fr_1920fr] bg-black font-[family-name:'Open_Sans','Noto_Sans',sans-serif]">
      <section className="pl-[3px] pt-0.5" aria-label="Второй монитор">
        <div className="h-[882px] bg-white" />
      </section>
      <section className="min-w-0 flex flex-col bg-[#f0f0f0]">
        <TitleBar />
        <MenuBar />
        <div className="text-xs text-black">
          <StandardBar />
          <DrawingBar />
        </div>
        <div className="grow flex">
          <MarketWatch />
          <Chart />
        </div>
        <TerminalStrip />
        <StatusBar />
        <Taskbar />
      </section>
    </div>
  );
}
